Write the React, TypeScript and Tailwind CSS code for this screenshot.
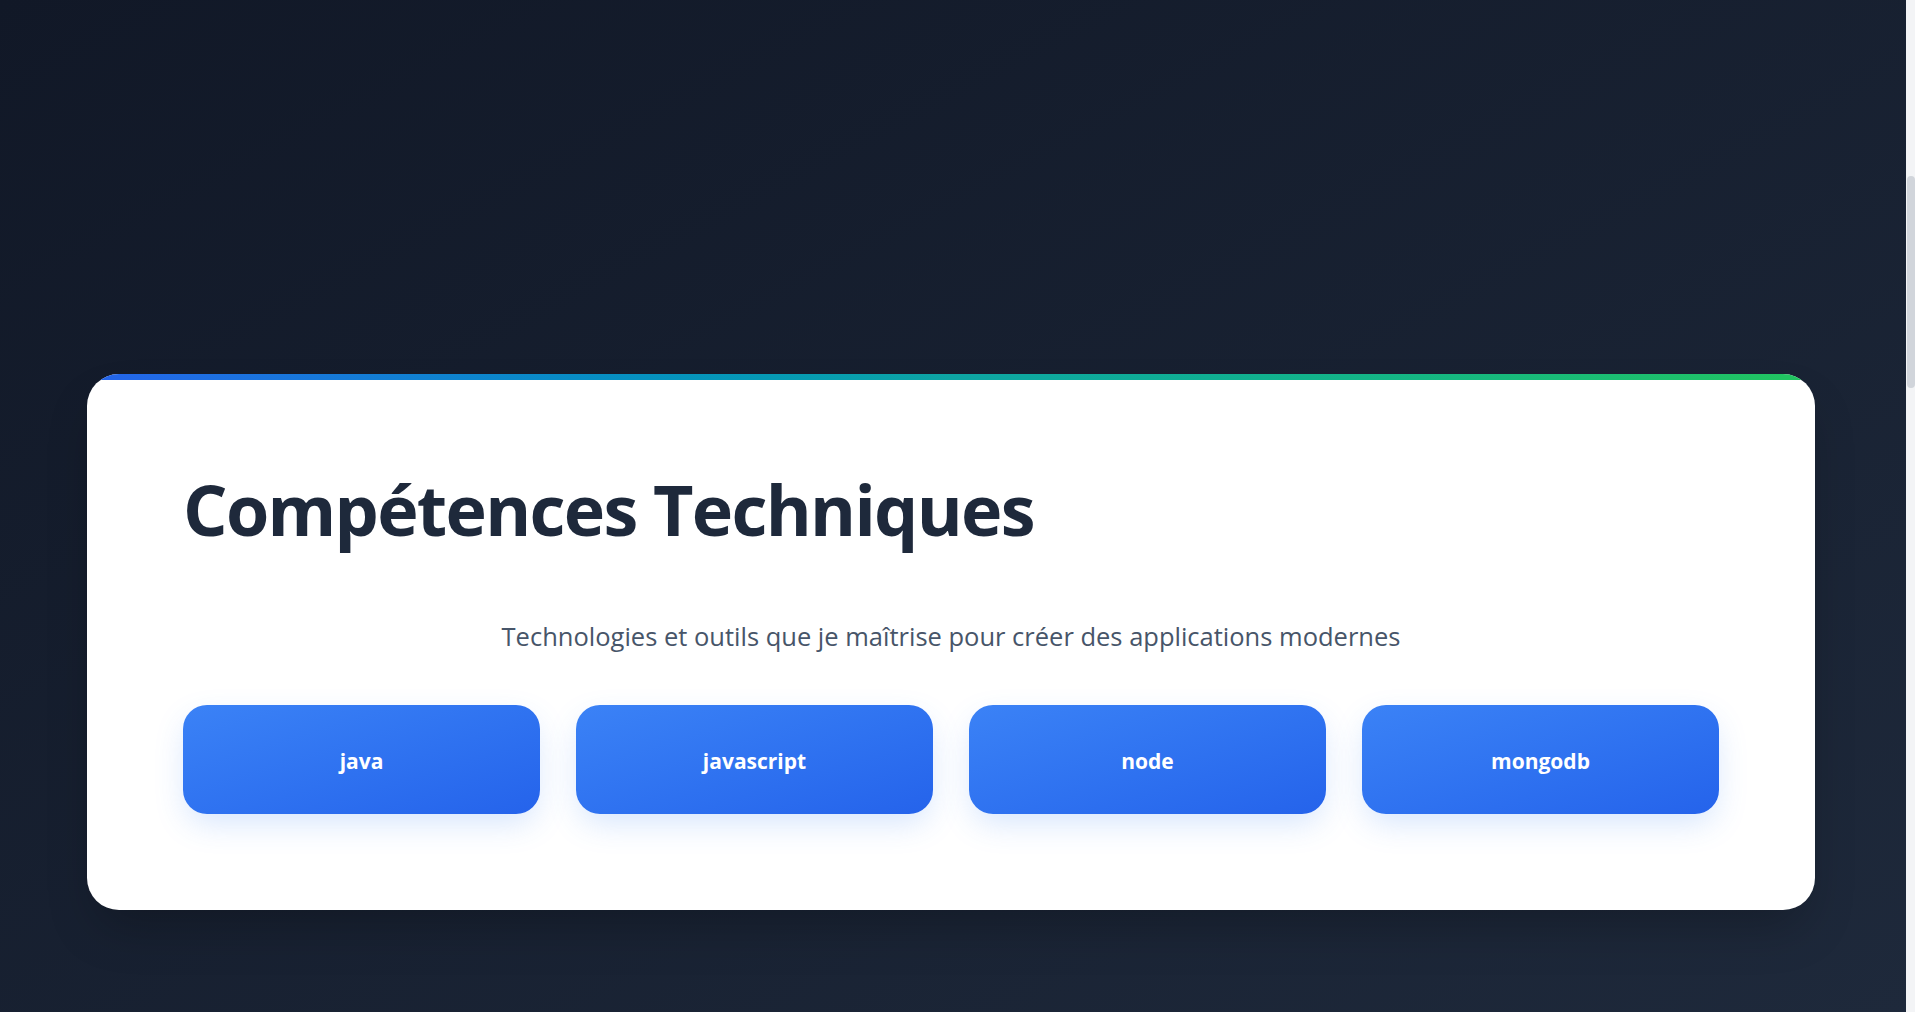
const skills = ['java', 'javascript', 'node', 'mongodb'];

function SkillTile(props: { name: string }) {
  return (
    <div className="flex h-[109px] items-center justify-center rounded-3xl bg-gradient-to-br from-[#3b82f6] to-[#2563eb] pt-1 shadow-[0_12px_32px_-4px_rgba(59,130,246,0.22)]">
      <span className="text-[21px] font-bold text-white">{props.name}</span>
    </div>
  );
}

export default function App() {
  return (
    <div
      className="flex h-[1012px] w-full overflow-hidden bg-gradient-to-br from-[#111827] to-[#1e293b]"
      style={{ fontFamily: '"Open Sans", "Noto Sans", sans-serif' }}
    >
      <main className="flex-1 pl-[87px] pt-[374px]">
        <section className="relative w-[1728px] overflow-hidden rounded-[32px] bg-white px-24 pb-24 pt-[97px] shadow-2xl">
          <div className="absolute inset-x-0 top-0 h-1.5 bg-gradient-to-r from-[#2563eb] via-[#0ea5a4] to-[#22c55e]" />

          <h2 className="text-[70px] font-bold leading-[1.1] tracking-[-1.7px] text-[#1e293b]">
            Compétences Techniques
          </h2>

          <p className="mt-[72px] text-center text-[25.5px] leading-8 text-[#475569]">
            Technologies et outils que je maîtrise pour créer des applications modernes
          </p>

          <div className="mt-[53px] grid grid-cols-4 gap-9">
            {skills.map((s) => (
              <SkillTile key={s} name={s} />
            ))}
          </div>
        </section>
      </main>

      <aside className="w-[9px] bg-[#f3f4f6]">
        <div className="ml-px mt-[176px] h-[212px] rounded-full bg-[#d1d5db]" />
      </aside>
    </div>
  );
}
